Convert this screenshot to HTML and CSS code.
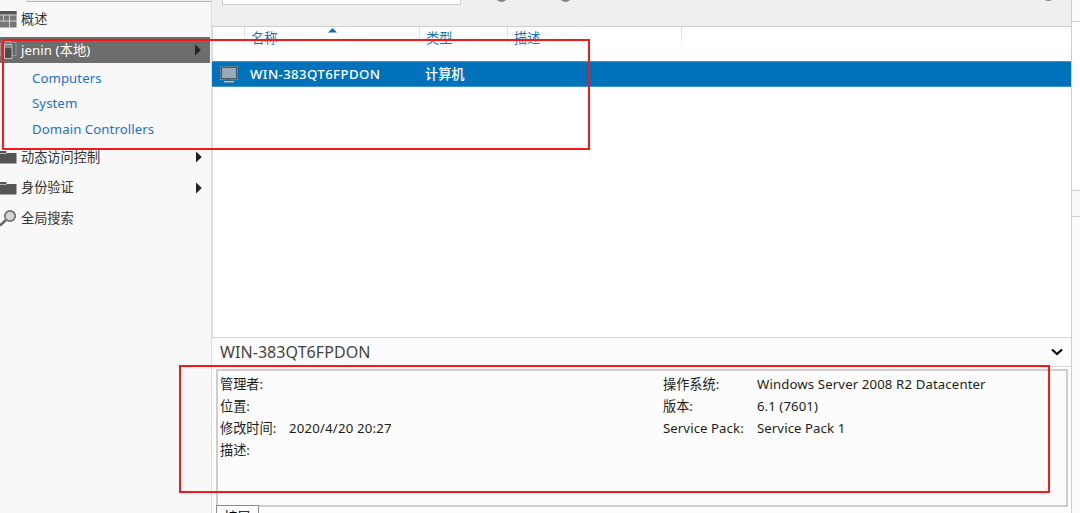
FILE: index.html
```html
<!DOCTYPE html>
<html lang="zh-CN">
<head>
<meta charset="utf-8">
<title>Active Directory</title>
<link rel="stylesheet" href="styles.css">
</head>
<body>
<div class="app">
  <nav class="sidebar">
    <div class="sidebar-top"></div>
    <div class="nav-item overview">
      <svg class="nav-icon" width="17" height="17" viewBox="0 0 17 17"><path fill="#777" d="M0 0h16.500v16.500H0z"/><path fill="#555" d="M0 0h16.500v3.500H0z"/><path stroke="#d0d0d0" stroke-width="1" fill="none" d="M0 4h16.500M0 10h16.500M3.500 4v6M9.500 4v12.500"/></svg>
      <span>概述</span>
    </div>
    <div class="nav-item selected">
      <svg class="nav-icon" width="17" height="20" viewBox="0 0 17 20"><path fill="#666" stroke="#969696" d="M.5 3.500h5v12h-5zM10.500 2.500h5.500v13h-5.500z"/><path fill="#4c4c4c" stroke="#bdbdbd" d="M4.500 4.500h7.500v14H4.500z"/><path stroke="#c8c8c8" d="M4.500 7h7.500M5 1.800h6"/><path fill="#858585" d="M5 5h6.500v1.500H5z"/></svg>
      <span class="node-name">jenin (本地)</span>
      <svg class="arrow" width="6" height="12" viewBox="0 0 6 12"><path fill="#222" d="M0 .5L5.800 6 0 11.500z"/></svg>
    </div>
    <div class="links">
      <a class="link">Computers</a>
      <a class="link">System</a>
      <a class="link">Domain Controllers</a>
    </div>
    <div class="nav-item">
      <svg class="nav-icon" width="17" height="14" viewBox="0 0 17 14"><path fill="#555" d="M0 1h6v2h10.500v10.500H0z"/><path stroke="#b5b5b5" fill="none" d="M0 3.500h6.500V1"/></svg>
      <span>动态访问控制</span>
      <svg class="arrow" width="6" height="12" viewBox="0 0 6 12"><path fill="#222" d="M0 .5L5.800 6 0 11.500z"/></svg>
    </div>
    <div class="nav-item">
      <svg class="nav-icon" width="17" height="14" viewBox="0 0 17 14"><path fill="#555" d="M0 1h6v2h10.500v10.500H0z"/><path stroke="#b5b5b5" fill="none" d="M0 3.500h6.500V1"/></svg>
      <span>身份验证</span>
      <svg class="arrow" width="6" height="12" viewBox="0 0 6 12"><path fill="#222" d="M0 .5L5.800 6 0 11.500z"/></svg>
    </div>
    <div class="nav-item">
      <svg class="nav-icon" width="17" height="18" viewBox="0 0 17 18"><path stroke="#666" stroke-width="2.400" d="M0 16.500l6-5.500"/><circle cx="10" cy="7" r="5.200" fill="#d4d4d4" stroke="#707070" stroke-width="1.700"/></svg>
      <span>全局搜索</span>
    </div>
  </nav>

  <main class="main">
    <div class="toolbar">
      <div class="filter-box"></div>
      <i class="round-btn b1"></i><i class="round-btn b2"></i><i class="round-btn b3"></i>
    </div>
    <div class="columns">
      <div class="col c-icon"></div>
      <div class="col c-name">名称<svg class="sort" width="9" height="5" viewBox="0 0 9 5"><path fill="#0a6fb5" d="M0 4.500L4.500 0 9 4.500z"/></svg></div>
      <div class="col c-type">类型</div>
      <div class="col c-desc">描述</div>
    </div>
    <div class="row">
      <svg class="pc" width="18" height="17" viewBox="0 0 18 17"><path fill="#98abba" stroke="#55595c" stroke-width="1.600" d="M1.300 1.300h15.400v11.400H1.300z"/><path stroke="#a39a91" fill="none" stroke-width=".6" d="M.3.300h17.400v13.400H.3z"/><path fill="#555" d="M7 13.500h4v2H7z"/><path fill="#c5b9ac" d="M4 15h10v1.500H4z"/></svg>
      <span class="row-name">WIN-383QT6FPDON</span>
      <span class="row-type">计算机</span>
    </div>
    <div class="list-space"></div>
    <header class="detail-head">
      <span class="detail-title">WIN-383QT6FPDON</span>
      <svg width="12" height="8" viewBox="0 0 12 8"><path fill="none" stroke="#000" stroke-width="2.200" d="M1 1.500l5 4.500 5-4.500"/></svg>
    </header>
    <section class="detail">
      <div class="panel">
        <dl class="fields left">
          <dt>管理者:</dt><dd></dd>
          <dt>位置:</dt><dd></dd>
          <dt>修改时间:</dt><dd class="v-date">2020/4/20 20:27</dd>
          <dt>描述:</dt><dd></dd>
        </dl>
        <dl class="fields right">
          <dt>操作系统:</dt><dd class="v-os">Windows Server 2008 R2 Datacenter</dd>
          <dt>版本:</dt><dd>6.1 (7601)</dd>
          <dt class="k-sp">Service Pack:</dt><dd>Service Pack 1</dd>
        </dl>
      </div>
      <div class="tab">扩展</div>
    </section>
  </main>

  <aside class="edge">
    <div class="edge-a"></div>
    <div class="edge-b"></div>
    <div class="edge-c"></div>
    <div class="edge-d"></div>
  </aside>

  <div class="mark mark-top"></div>
  <div class="mark mark-bottom"></div>
</div>
</body>
</html>
```
FILE: styles.css
```css
* { box-sizing: border-box; }
body {
  margin: 0;
  font: 13.200px/20px "Noto Sans", "Noto Sans CJK SC", sans-serif;
  color: #262626;
  white-space: nowrap;
}
.app { position: relative; display: flex; width: 1080px; height: 513px; overflow: hidden; background: #fff; }

.sidebar { width: 213px; height: 513px; flex: none; background: #f8f8f8; border-right: 2px solid #dcdcdc; margin-right: -1px; }
.sidebar-top { height: 2px; margin-left: 26px; background: #efefef; border-bottom: 1px solid #b4b4b4; }
.nav-item { display: flex; align-items: center; height: 30.500px; padding-right: 9px; color: #333; }
.nav-item span { margin-top: -1px; }
.nav-icon { flex: none; width: 17px; margin-right: 4px; }
.arrow { margin-left: auto; }
.overview { height: 35px; }
.selected { width: 210px; height: 26px; background: #6d6d6d; color: #fff; padding-right: 9px; }
.node-name { letter-spacing: .1px; }
.links { display: flex; flex-direction: column; height: 79px; padding: 3px 0 0 32px; }
.link { color: #1e6fd0; height: 25.300px; line-height: 25.300px; align-self: flex-start; letter-spacing: .08px; }

.main { display: flex; flex-direction: column; width: 860px; height: 513px; flex: none; border-right: 1px solid #cfcfcf; }
.toolbar { position: relative; height: 27px; flex: none; background: #efefef; border-bottom: 1px solid #cecece; padding-left: 10px; }
.filter-box { width: 239px; height: 5px; background: #fff; border: 1px solid #cfcfcf; border-top: 0; }
.round-btn { position: absolute; top: -11px; width: 13px; height: 13px; border: 2px solid #848484; border-radius: 50%; }
.b1 { left: 283px; }
.b2 { left: 347px; }
.b3 { left: 830px; top: -12px; }
.columns { display: flex; height: 34px; flex: none; color: #1674ba; }
.col { position: relative; height: 22px; line-height: 23px; padding-left: 6px; border-right: 1px solid; border-image: linear-gradient(#d8d8d8, #fff) 1; }
.c-icon { width: 33px; }
.c-name { width: 175px; }
.c-type { width: 88px; }
.c-desc { width: 174px; }
.sort { position: absolute; left: 83px; top: 1px; }
.row { display: flex; align-items: center; height: 26px; flex: none; background: #0072bc; color: #fff; padding-left: 8px; border: solid #3c94cb; border-width: 1px 0; }
.row span { margin-top: -1px; font-weight: 500; }
.pc { margin-right: 12px; }
.row-name { width: 175px; letter-spacing: .4px; }
.list-space { flex: 1; }
.detail-head { display: flex; align-items: center; justify-content: space-between; height: 30px; flex: none; padding: 0 8px; background: #fcfcfc; border: solid #d5d5d5; border-width: 1px 0; color: #444; font-size: 16px; }
.detail-title { margin-top: -1px; letter-spacing: .07px; }
.detail { height: 146px; flex: none; padding: 2px 3px 0 4px; background: #fcfcfc; }
.panel { display: flex; height: 138px; border: 2px solid #cecece; padding: 2px 0 0 2px; color: #1c1c1c; }
.fields { display: grid; grid-auto-rows: 22px; align-content: start; margin: 0; line-height: 22px; }
.fields dt, .fields dd { margin: 0; }
.fields dd, .k-sp { letter-spacing: .08px; }
.fields .v-date { letter-spacing: .2px; }
.fields .v-os { letter-spacing: .13px; }
.left { width: 443px; grid-template-columns: 69px auto; }
.right { grid-template-columns: 94px auto; }
.tab { position: relative; width: 43px; height: 24px; margin-top: -2px; padding-left: 7px; line-height: 22px; background: #fff; border: 1px solid #858b9b; color: #000; }

.edge { display: flex; flex-direction: column; flex: 1; background: #fff; }
.edge-a { height: 22px; background: #fbfbfb; border-bottom: 1px solid #d0d0d0; }
.edge-b { height: 169px; border-bottom: 1px solid #d0d0d0; }
.edge-c { height: 26px; background: #fafafa; border-bottom: 1px solid #d0d0d0; }
.edge-d { flex: 1; background: #fcfcfc; }

.mark { position: absolute; border: 2px solid #f81818; }
.mark-top { left: 2px; top: 39px; width: 588px; height: 111px; }
.mark-bottom { left: 179px; top: 365px; width: 871px; height: 128px; }
```
